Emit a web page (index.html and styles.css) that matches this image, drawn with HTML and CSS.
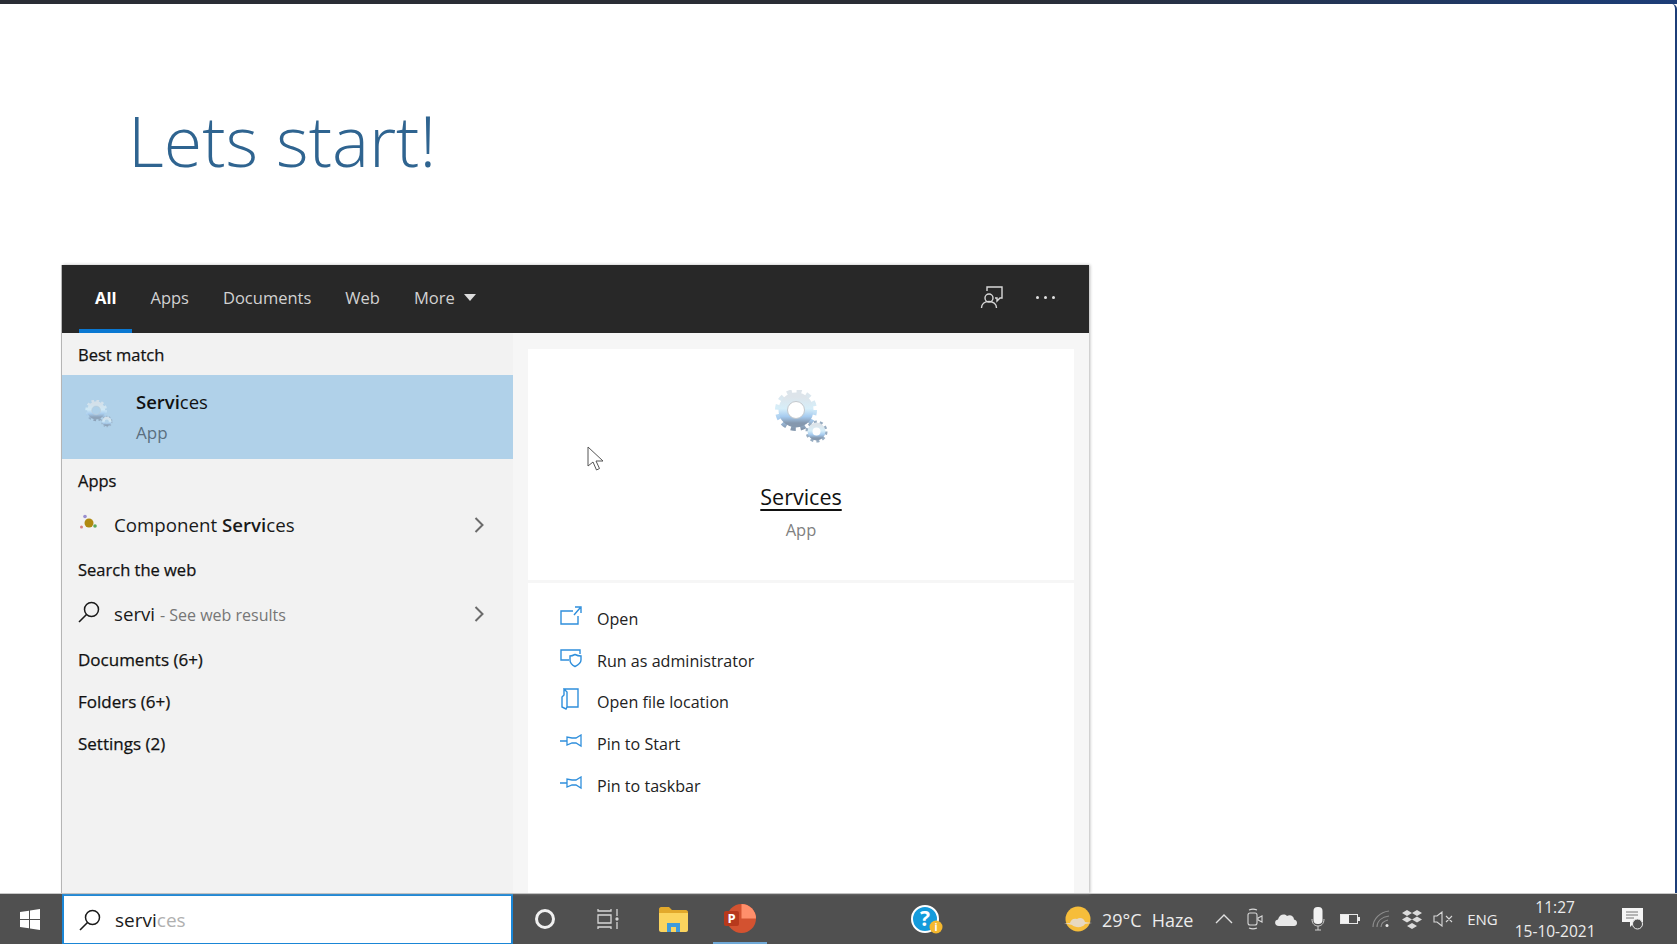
FILE: index.html
```html
<!DOCTYPE html>
<html lang="en">
<head>
    <meta charset="UTF-8">
    <title>Lets start!</title>
    <link rel="stylesheet" href="styles.css">
</head>
<body>
    <svg class="defs" width="0" height="0">
        <defs>
            <linearGradient id="steel" x1="0" y1="0" x2="0" y2="1">
                <stop offset="0" stop-color="#dde4ea"/>
                <stop offset="0.45" stop-color="#d6eef9"/>
                <stop offset="0.75" stop-color="#a6cbef"/>
                <stop offset="1" stop-color="#8598ae"/>
            </linearGradient>
            <symbol id="gears" viewBox="0 0 53 54">
                <circle cx="21" cy="20" r="18.5" fill="none" stroke="url(#steel)" stroke-width="5" stroke-dasharray="5 4.69"/>
                <circle cx="21" cy="20" r="13" fill="none" stroke="url(#steel)" stroke-width="9"/>
                <circle cx="21" cy="20" r="8.5" fill="none" stroke="#c3c8cd" stroke-width="1"/>
                <circle cx="41.5" cy="41.5" r="9.5" fill="none" stroke="#98adc2" stroke-width="3" stroke-dasharray="3 2.97"/>
                <circle cx="41.5" cy="41.5" r="6.5" fill="none" stroke="url(#steel)" stroke-width="5"/>
            </symbol>
            <symbol id="pin" viewBox="0 0 22 14">
                <path d="M0 7h7M7 3v8l5-2h4l5 3V1l-5 3h-4z" fill="none" stroke="#2f8fdc" stroke-width="1.3"/>
            </symbol>
            <symbol id="search" viewBox="0 0 22 22">
                <circle cx="13.5" cy="8.5" r="7" fill="none" stroke="currentColor" stroke-width="1.5"/>
                <path d="M8.5 13.5L1 21" fill="none" stroke="currentColor" stroke-width="1.6"/>
            </symbol>
            <symbol id="chevron" viewBox="0 0 10 16">
                <path d="M1.5 1l7 7-7 7" fill="none" stroke="#6b6b6b" stroke-width="2"/>
            </symbol>
        </defs>
    </svg>

    <div class="topbar"></div>

    <main class="slide">
        <h1 class="slide-title">Lets start!</h1>

        <section class="panel">
            <header class="panel-head">
                <nav class="tabs">
                    <a class="tab active">All</a>
                    <a class="tab">Apps</a>
                    <a class="tab">Documents</a>
                    <a class="tab">Web</a>
                    <a class="tab">More <span class="caret"></span></a>
                </nav>
                <div class="head-tools">
                    <svg class="feedback" width="24" height="24" viewBox="0 0 24 24" fill="none" stroke="#d8d8d8" stroke-width="1.4">
                        <path d="M7 6V2h15v11h-2l-3 3v-3h-2"/>
                        <circle cx="9" cy="13" r="4"/>
                        <path d="M1.5 23c0-4 3-6.500 7.500-6.500s7.500 2.500 7.500 6.500"/>
                    </svg>
                    <span class="dots"><i></i><i></i><i></i></span>
                </div>
            </header>

            <div class="panel-body">
                <div class="results">
                    <div class="group-title">Best match</div>
                    <div class="best-row">
                        <svg class="best-icon"><use href="#gears"/></svg>
                        <div>
                            <div class="best-name"><b>Servi</b>ces</div>
                            <div class="best-kind">App</div>
                        </div>
                    </div>
                    <div class="group-title">Apps</div>
                    <div class="result-row">
                        <svg class="row-icon" width="18" height="18" viewBox="0 0 18 18">
                            <circle cx="9" cy="9" r="4.500" fill="#b08a10"/>
                            <circle cx="5" cy="2.500" r="1.800" fill="#9a8fd0"/>
                            <circle cx="1.500" cy="13" r="1.500" fill="#d88080"/>
                            <circle cx="15" cy="12" r="1.800" fill="#5aa85a"/>
                        </svg>
                        <span class="row-text">Component <b>Servi</b>ces</span>
                        <svg class="row-arrow"><use href="#chevron"/></svg>
                    </div>
                    <div class="group-title">Search the web</div>
                    <div class="result-row">
                        <svg class="row-icon web-icon" width="22" height="22"><use href="#search"/></svg>
                        <span class="row-text">servi <small>- See web results</small></span>
                        <svg class="row-arrow"><use href="#chevron"/></svg>
                    </div>
                    <div class="group-title counted first-counted">Documents (6+)</div>
                    <div class="group-title counted">Folders (6+)</div>
                    <div class="group-title counted">Settings (2)</div>
                </div>

                <div class="details">
                    <div class="detail-card">
                        <svg class="detail-icon"><use href="#gears"/></svg>
                        <a class="detail-name">Services</a>
                        <div class="detail-kind">App</div>
                    </div>
                    <ul class="actions">
                        <li>
                            <svg width="22" height="20" viewBox="0 0 22 20" fill="none" stroke="#2f8fdc" stroke-width="1.400">
                                <path d="M13 5H1v13h17v-8M14 9l6-7M15 1h6v6"/>
                            </svg>
                            Open
                        </li>
                        <li>
                            <svg width="22" height="20" viewBox="0 0 22 20" fill="none" stroke="#2f8fdc" stroke-width="1.400">
                                <path d="M9 12H1V2h19v4"/>
                                <path d="M10 8c2 0 3-.500 5-1.500 2 1 3 1.500 6 1.500v4c0 3-3 5-6 6.500-3-1.500-5-3.500-5-6.500z"/>
                            </svg>
                            Run as administrator
                        </li>
                        <li>
                            <svg width="22" height="22" viewBox="0 0 22 22" fill="none" stroke="#2f8fdc" stroke-width="1.400">
                                <path d="M4 1h14v18H7M4 1l3 3v15l-1 2-4-2V9l2-2z"/>
                            </svg>
                            Open file location
                        </li>
                        <li><svg width="22" height="14"><use href="#pin"/></svg>Pin to Start</li>
                        <li><svg width="22" height="14"><use href="#pin"/></svg>Pin to taskbar</li>
                    </ul>
                </div>
            </div>
        </section>

        <svg class="cursor" width="18" height="26" viewBox="0 0 18 26">
            <path d="M1 1v19l5-4 3.500 8 3-1.500-3.500-7.500h7z" fill="#fff" stroke="#555" stroke-width="1"/>
        </svg>
    </main>

    <footer class="taskbar">
        <div class="start">
            <svg width="20" height="21" viewBox="0 0 20 21" fill="#fff">
                <path d="M0 3l9-1.300V10H0zM10 1.500L20 0v10H10zM0 11h9v8.300L0 18zM10 11h10v10l-10-1.500z"/>
            </svg>
        </div>
        <div class="search-box">
            <svg class="search-icon" width="22" height="22"><use href="#search"/></svg>
            <span class="search-text">servi<span class="search-hint">ces</span></span>
        </div>

        <div class="cell"><span class="cortana"></span></div>
        <div class="cell">
            <svg width="22" height="22" viewBox="0 0 22 22" fill="none" stroke="#d6d6d6" stroke-width="1.300">
                <path d="M1 1v2h13V1M1 7h13v8H1zM1 21v-2h13v2M20 1v7M20 14v7"/>
                <circle cx="20" cy="11" r="1" fill="#d6d6d6"/>
            </svg>
        </div>
        <div class="cell explorer">
            <svg width="29" height="25" viewBox="0 0 29 25">
                <path d="M0 2c0-1 1-2 2-2h8l3 3h14c1 0 2 1 2 2v3H0z" fill="#e2a92b"/>
                <path d="M0 6h29v17c0 1-1 2-2 2H2c-1 0-2-1-2-2z" fill="#fbd45e"/>
                <path d="M8 25v-9h13v9h-4v-5h-5v5z" fill="#3e9bdc"/>
            </svg>
        </div>
        <div class="cell ppt">
            <svg width="32" height="29" viewBox="0 0 32 29">
                <circle cx="17.500" cy="14.500" r="14.500" fill="#d35230"/>
                <path d="M17.500 0a14.500 14.500 0 0 1 14.500 14.500H17.500z" fill="#ff8f6b"/>
                <rect x="0" y="7" width="15" height="15" rx="2" fill="#b7391c"/>
                <text class="ppt-letter" x="7.500" y="19" text-anchor="middle">P</text>
            </svg>
        </div>
        <div class="cell help">
            <svg width="32" height="30" viewBox="0 0 32 30">
                <circle cx="14" cy="14" r="13" fill="#149bdc" stroke="#fff" stroke-width="2"/>
                <text class="help-mark" x="14" y="21" text-anchor="middle">?</text>
                <circle cx="25" cy="22" r="6.500" fill="#f5b82e"/>
                <text class="help-info" x="25" y="26" text-anchor="middle">i</text>
            </svg>
        </div>

        <div class="weather">
            <svg width="28" height="26" viewBox="0 0 28 26">
                <circle cx="14" cy="13" r="12.500" fill="#f6bd3a"/>
                <path d="M0 17h6c1-4 4-5 7-4 3-2 7-1 8 3l7 1-7 1c-2 4-10 4-13 1z" fill="#e8d9c0"/>
            </svg>
            <span class="temp">29°C</span>
            <span class="haze">Haze</span>
        </div>

        <div class="tray">
            <div class="tray-cell">
                <svg width="18" height="10" viewBox="0 0 18 10" fill="none" stroke="#e0e0e0" stroke-width="1.400"><path d="M1 9l8-8 8 8"/></svg>
            </div>
            <div class="tray-cell">
                <svg width="16" height="22" viewBox="0 0 16 22" fill="none" stroke="#d8d8d8" stroke-width="1.100">
                    <path d="M2 2c3-1.300 5-1.300 8 0M2 20c3 1.300 5 1.300 8 0"/>
                    <rect x="1" y="5" width="9" height="12" rx="2"/>
                    <path d="M11 10l4-2v6l-4-2z"/>
                </svg>
            </div>
            <div class="tray-cell">
                <svg width="22" height="13" viewBox="0 0 22 13" fill="#e8e8e8">
                    <path d="M4 13c-5 0-5-6-1-6.500C4 2 9 0 12 3c3-2 7 0 7 3.500 4 .5 4 6.500 0 6.500z"/>
                </svg>
            </div>
            <div class="tray-cell">
                <svg width="14" height="24" viewBox="0 0 14 24">
                    <rect x="2.500" y="0" width="9" height="17" rx="4" fill="#f2f2f2"/>
                    <path d="M1 12c0 5 3 7 6 7s6-2 6-7M7 19v4M4 23h6" fill="none" stroke="#cfcfcf" stroke-width="1"/>
                </svg>
            </div>
            <div class="tray-cell"><span class="battery"><i></i></span></div>
            <div class="tray-cell">
                <svg width="18" height="18" viewBox="0 0 18 18" fill="none" stroke="#8d8d8d" stroke-width="1.200">
                    <path d="M1 17C1 9 8 2 17 1M5 17c0-6 5-10 12-11M9 17c0-4 3-6 7-7"/>
                    <circle cx="15" cy="15.500" r="1.500" fill="#e8e8e8" stroke="none"/>
                </svg>
            </div>
            <div class="tray-cell">
                <svg width="20" height="19" viewBox="0 0 20 19" fill="#dcdcdc">
                    <path d="M5 0l5 3-5 3-5-3zM15 0l5 3-5 3-5-3zM5 6.500l5 3-5 3-5-3zM15 6.500l5 3-5 3-5-3zM10 13l5 3-5 3-5-3z"/>
                </svg>
            </div>
            <div class="tray-cell">
                <svg width="20" height="16" viewBox="0 0 20 16" fill="none" stroke="#d8d8d8" stroke-width="1.100">
                    <path d="M1 5h3l5-4v14l-5-4H1zM13 5l6 6M19 5l-6 6"/>
                </svg>
            </div>
        </div>

        <span class="lang">ENG</span>
        <div class="clock">
            <span>11:27</span>
            <span>15-10-2021</span>
        </div>
        <div class="notify">
            <svg width="22" height="22" viewBox="0 0 22 22">
                <path d="M0 0h21v14h-8l-5 5v-5H0z" fill="#f5f5f5"/>
                <path d="M4 4h12M4 7h12M4 10h8" stroke="#777" stroke-width="1"/>
                <circle cx="15.500" cy="16" r="5" fill="#505050" stroke="#eee" stroke-width="1"/>
            </svg>
        </div>
    </footer>
</body>
</html>
```

FILE: styles.css
```css
/* General Styles */
html, body {
    margin: 0;
    height: 100%;
}

body {
    width: 1677px;
    height: 944px;
    overflow: hidden;
    display: flex;
    flex-direction: column;
    font-family: "Open Sans", "Noto Sans", sans-serif;
    background: #fff;
    color: #1a1a1a;
}

.defs {
    position: absolute;
}

.topbar {
    height: 4px;
    flex: none;
    background: linear-gradient(90deg, #2a2d35 0%, #2a2d35 60%, #1c3d78 100%);
}

/* Slide */
.slide {
    flex: 1;
    min-height: 0;
    position: relative;
    display: flex;
    flex-direction: column;
    border-right: 2px solid #1c3d78;
    border-top-right-radius: 5px;
}

.slide-title {
    margin: 0;
    height: 261px;
    flex: none;
    box-sizing: border-box;
    padding: 88px 0 0 128px;
    font-family: "Open Sans", sans-serif;
    font-weight: 300;
    font-size: 69.800px;
    line-height: 96px;
    color: #2f6490;
}

.cursor {
    position: absolute;
    left: 587px;
    top: 442px;
}

/* Search panel */
.panel {
    flex: 1;
    min-height: 0;
    width: 1027px;
    margin-left: 62px;
    display: flex;
    flex-direction: column;
    box-shadow: -1px 0 0 #b5b5b5, 1px 0 3px #b5b5b5;
}

.panel-head {
    height: 68px;
    flex: none;
    display: flex;
    justify-content: space-between;
    background: #282828;
}

.tabs {
    display: flex;
    gap: 2px;
    margin-left: 17px;
}

.tab {
    display: flex;
    align-items: center;
    gap: 9px;
    height: 64px;
    padding: 0 16px;
    font-size: 16.500px;
    color: #d2d2d2;
    border-bottom: 5px solid transparent;
}

.tab.active {
    color: #fff;
    font-weight: 700;
    border-bottom-color: #0a78d2;
}

.caret {
    width: 0;
    height: 0;
    border-left: 6.500px solid transparent;
    border-right: 6.500px solid transparent;
    border-top: 7px solid #dcdcdc;
}

.head-tools {
    display: flex;
    align-items: center;
    gap: 32px;
    padding: 0 34px 4px 0;
}

.dots {
    display: flex;
    gap: 5px;
}

.dots i {
    width: 3px;
    height: 3px;
    border-radius: 50%;
    background: #e2e2e2;
}

.panel-body {
    flex: 1;
    min-height: 0;
    display: flex;
    overflow: hidden;
    background: #f6f6f6;
}

/* Left column */
.results {
    width: 451px;
    flex: none;
    background: #f2f2f2;
}

.group-title {
    height: 42px;
    display: flex;
    align-items: center;
    padding-left: 16px;
    font-size: 16.500px;
    color: #111;
    -webkit-text-stroke: 0.25px #111;
}

.group-title.counted {
    font-size: 17px;
}

.group-title.first-counted {
    margin-top: 1px;
}

.best-row {
    height: 84px;
    display: flex;
    align-items: center;
    gap: 23px;
    padding-left: 23px;
    background: #b0d1e9;
}

.best-icon {
    width: 28px;
    height: 28px;
    margin-top: -6px;
    opacity: 0.8;
}

.best-name {
    font-size: 18.500px;
    line-height: 26px;
    color: #111;
    margin-bottom: 6px;
}

.best-name b,
.row-text b {
    font-weight: 600;
}

.best-kind {
    font-size: 17px;
    line-height: 24px;
    color: #5a6f80;
}

.result-row {
    height: 47px;
    display: flex;
    align-items: center;
    padding-left: 18px;
}

.row-icon {
    width: 18px;
    margin-right: 16px;
    margin-top: -4px;
}

.web-icon {
    width: 22px;
    margin-left: -2px;
    margin-right: 14px;
    color: #1a1a1a;
}

.row-text {
    font-size: 18.700px;
}

.row-text small {
    font-size: 16px;
    color: #767676;
}

.row-arrow {
    width: 10px;
    height: 16px;
    margin-left: auto;
    margin-right: 29px;
}

/* Right column */
.details {
    flex: 1;
    padding: 16px 15px 0 15px;
    display: flex;
    flex-direction: column;
    gap: 3px;
}

.detail-card {
    height: 231px;
    flex: none;
    display: flex;
    flex-direction: column;
    align-items: center;
    background: #fff;
}

.detail-icon {
    width: 53px;
    height: 54px;
    margin-top: 41px;
}

.detail-name {
    margin-top: 38px;
    font-size: 21.500px;
    line-height: 30px;
    color: #111;
    text-decoration: underline;
    text-underline-offset: 4px;
}

.detail-kind {
    margin-top: 6px;
    font-size: 16.500px;
    line-height: 24px;
    color: #808080;
}

.actions {
    flex: 1;
    margin: 0;
    padding: 15px 0 0 32px;
    list-style: none;
    background: #fff;
}

.actions li {
    height: 41.800px;
    display: flex;
    align-items: center;
    gap: 15px;
    font-size: 16.100px;
    color: #222;
}

.actions svg {
    margin-top: -6px;
}

/* Taskbar */
.taskbar {
    height: 51px;
    flex: none;
    display: flex;
    align-items: center;
    background: #505050;
    color: #ececec;
    border-top: 1px solid #c8c8c8;
    box-sizing: border-box;
}

.start {
    width: 62px;
    flex: none;
    display: flex;
    justify-content: center;
    padding-right: 3px;
    box-sizing: border-box;
}

.search-box {
    width: 451px;
    height: 100%;
    flex: none;
    box-sizing: border-box;
    display: flex;
    align-items: center;
    padding-left: 15px;
    background: #fff;
    border: 2px solid #1a86d6;
    border-bottom-width: 1px;
    color: #1a1a1a;
}

.search-icon {
    margin-right: 14px;
}

.search-text {
    font-size: 19px;
    padding-top: 1px;
}

.search-hint {
    color: #b0b0b0;
}

.cell {
    width: 63px;
    height: 100%;
    flex: none;
    display: flex;
    align-items: center;
    justify-content: center;
}

.cortana {
    width: 14px;
    height: 14px;
    border: 3px solid #f0f0f0;
    border-radius: 50%;
}

.explorer {
    margin-left: 3px;
}

.ppt {
    width: 54px;
    margin-left: 8px;
    box-sizing: border-box;
    border-bottom: 2px solid #6fa8d6;
}

.ppt-letter {
    font: 700 13px "Open Sans", sans-serif;
    fill: #fff;
}

.help {
    width: 52px;
    margin-left: 134px;
    padding-top: 2px;
    box-sizing: border-box;
}

.help-mark {
    font: 700 21px "Open Sans", sans-serif;
    fill: #fff;
}

.help-info {
    font: 700 10px "Open Sans", sans-serif;
    fill: #fff;
}

.weather {
    display: flex;
    align-items: center;
    margin-left: 111px;
    width: 144px;
    flex: none;
    font-size: 18px;
}

.temp {
    margin-left: 10px;
    padding-top: 2px;
}

.haze {
    margin-left: 10px;
    padding-top: 2px;
}

.tray {
    display: flex;
    flex: none;
}

.tray-cell {
    width: 31.400px;
    display: flex;
    align-items: center;
    justify-content: center;
}

.battery {
    position: relative;
    width: 18px;
    height: 10px;
    border: 1px solid #e8e8e8;
    display: block;
    box-sizing: border-box;
}

.battery i {
    display: block;
    width: 8px;
    height: 100%;
    background: #f2f2f2;
}

.battery::after {
    content: "";
    position: absolute;
    right: -3px;
    top: 2px;
    width: 2px;
    height: 4px;
    background: #e8e8e8;
}

.lang {
    margin-left: 8px;
    width: 43px;
    flex: none;
    font-size: 15px;
}

.clock {
    width: 90px;
    flex: none;
    display: flex;
    flex-direction: column;
    align-items: center;
    gap: 5px;
    font-size: 15.500px;
    line-height: 19px;
}

.notify {
    margin-left: 22px;
    display: flex;
}
```
